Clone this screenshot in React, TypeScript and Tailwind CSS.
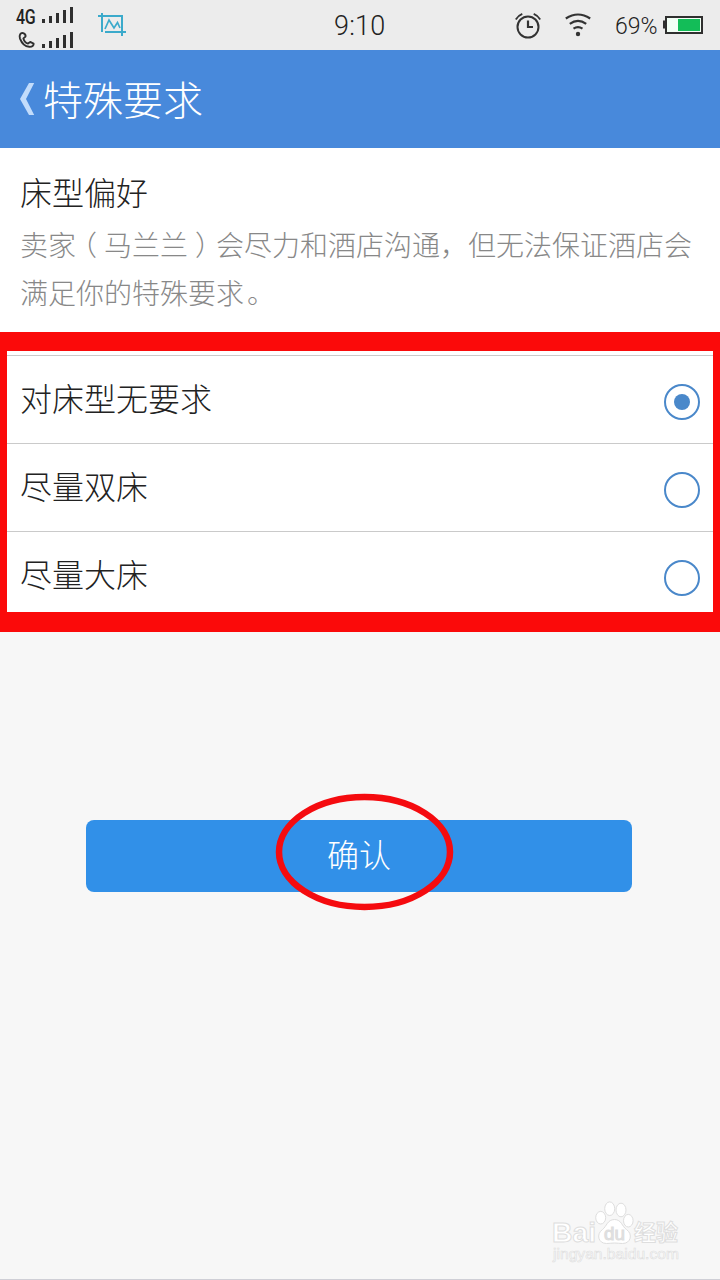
import { useState } from 'react';

const options = ['对床型无要求', '尽量双床', '尽量大床'];

function SignalBars() {
  return (
    <svg width="32" height="17" viewBox="0 0 32 17" fill="#2f2f2f">
      <rect x="0" y="13" width="3" height="4" />
      <rect x="7" y="10" width="3" height="7" />
      <rect x="14" y="7" width="3" height="10" />
      <rect x="21" y="4" width="3" height="13" />
      <rect x="28" y="1" width="3" height="16" />
    </svg>
  );
}

function StatusBar() {
  return (
    <div className="flex h-[50px] bg-[#ececec] text-[#222]">
      <div className="flex w-[98px] flex-col pl-4 pt-[6px]">
        <div className="flex h-[25px] items-start">
          <span className="mt-[2px] w-[26px] origin-left scale-x-[0.82] font-['Roboto','Liberation_Sans',sans-serif] text-[19.5px] font-medium leading-[20px] tracking-[-0.5px]">4G</span>
          <SignalBars />
        </div>
        <div className="flex items-start">
          <svg width="26" height="18" viewBox="0 0 26 18" fill="none" stroke="#2f2f2f" strokeWidth="1.9" strokeLinejoin="round">
            <path d="M7.200 2.200C4.600 1.400 2.800 4 4 7.600c1.600 4.200 5.200 7.800 9.200 8.200 3 .3 4.800-1.600 4.400-3.200l-3.400-1.700-2.200 1.700C10 12 8 9.600 7.400 7.400L9.500 5.600c.3-1.500-.8-2.900-2.300-3.400Z" />
          </svg>
          <SignalBars />
        </div>
      </div>
      <svg className="mt-3" width="29" height="25" viewBox="0 0 29 25" fill="none" stroke="#3baacb" strokeWidth="2">
        <path d="M0 4h24v20M4 1v19M7 20h21" />
        <path d="M7 17l4-9 5 8 3.500-5.500L22 16" strokeWidth="1.700" />
      </svg>
      <div className="ml-[207px] w-[181px] font-['Roboto','Liberation_Sans',sans-serif] text-[27px] font-light leading-[52px] tracking-[0.2px]">9:10</div>
      <svg className="mt-3" width="27" height="27" viewBox="0 0 27 27" fill="none" stroke="#333" strokeWidth="2">
        <circle cx="13" cy="15" r="10.500" />
        <path d="M13 8.500V15h5" strokeWidth="2.200" />
        <path d="M.8 7.500Q3 3.500 7.300 1.800M25.200 7.500Q23 3.500 18.700 1.800" strokeWidth="1.800" />
      </svg>
      <svg className="ml-[23px] mt-3" width="26" height="25" viewBox="0 0 26 25" fill="none" stroke="#333" strokeWidth="2.200">
        <path d="M.8 6.500Q13-1.500 25.200 6.500M4.800 11.800Q13 6 21.200 11.800M8.500 16.600Q13 13.800 17.500 16.600" />
        <circle cx="13" cy="22" r="2.200" fill="#333" stroke="none" />
      </svg>
      <div className="ml-6 w-12 font-['Roboto','Liberation_Sans',sans-serif] text-[23px] font-light leading-[53px]">69%</div>
      <svg className="mt-4" width="40" height="18" viewBox="0 0 40 18">
        <rect x="0" y="4.500" width="3" height="8" fill="#2f2f2f" />
        <rect x="3" y="1" width="36" height="16" fill="#f3fff6" stroke="#2f2f2f" strokeWidth="2" />
        <rect x="15" y="3" width="22" height="12" fill="#13bd58" />
      </svg>
    </div>
  );
}

function Radio({ checked }: { checked: boolean }) {
  return (
    <span className="mt-[5px] flex size-9 items-center justify-center rounded-full border-2 border-[#4a88ca]">
      {checked && <span className="size-4 rounded-full bg-[#4a88ca]" />}
    </span>
  );
}

function Watermark() {
  return (
    <svg className="absolute left-[550px] top-[1199px]" width="136" height="68" viewBox="0 0 136 68" fill="#fff" stroke="#dedede" strokeWidth="1">
      <text x="2" y="43" fontFamily="Liberation Sans, sans-serif" fontWeight="bold" fontSize="28" textLength="44" lengthAdjust="spacingAndGlyphs">Bai</text>
      <path d="M64.500 20.500c-7 0-8 7-12 10-6.500 4.500-4.500 14 4 14 3 0 5.300-.5 8-.5s5 .5 8 .5c8.500 0 10.500-9.500 4-14-4.500-3-5-10-12-10Z" />
      <ellipse cx="50.700" cy="18.700" rx="5" ry="6.300" />
      <ellipse cx="59.700" cy="9.700" rx="5" ry="6.800" />
      <ellipse cx="71" cy="11" rx="5" ry="6.800" />
      <ellipse cx="78.300" cy="21.700" rx="4.800" ry="6.300" />
      <text x="54" y="41" fontFamily="Liberation Sans, sans-serif" fontSize="18" fill="#e2e2e2" textLength="21" lengthAdjust="spacingAndGlyphs">du</text>
      <text x="84" y="41" fontFamily="Noto Sans CJK SC, sans-serif" fontWeight="bold" fontSize="22" textLength="44">经验</text>
      <text x="3" y="60" fontFamily="Liberation Sans, sans-serif" fontSize="14" strokeWidth=".6" textLength="126" lengthAdjust="spacingAndGlyphs">jingyan.baidu.com</text>
    </svg>
  );
}

export default function App() {
  const [selected, setSelected] = useState(0);

  return (
    <div className="relative flex h-[1280px] w-[720px] flex-col overflow-hidden border-b border-[#cfcfd6] bg-[#f7f7f7] font-['Noto_Sans_CJK_SC',sans-serif] font-light">
      <StatusBar />
      <header className="flex h-[98px] items-center bg-[#4889db] pl-5 text-white">
        <svg width="15" height="34" viewBox="0 0 15 34" fill="#c2dcfb">
          <path d="M9 1H14.200L6 17 14.200 33H9L0 17Z" />
        </svg>
        <h1 className="mb-[3px] ml-2 text-[40px] font-light leading-[60px]">特殊要求</h1>
      </header>

      <section className="h-[184px] bg-white pl-5 pt-[18px]">
        <h2 className="text-[32px] font-light leading-[50px] text-[#222]">床型偏好</h2>
        <p className="mt-1 w-[680px] text-[28px] leading-[48px] text-[#888]">
          <span className="block">
            卖家<span className="ml-[7px] mr-[7px] [font-feature-settings:'halt']">（</span>马兰兰<span className="ml-[7px] mr-[7px] [font-feature-settings:'halt']">）</span>会尽力和酒店沟通，但无法保证酒店会
          </span>
          <span className="block">
            满足你的特殊要求<span className="ml-[3px] [font-feature-settings:'halt']">。</span>
          </span>
        </p>
      </section>

      <section className="h-[300px] overflow-hidden border-x-[7px] border-b-[20px] border-t-[19px] border-[#fb0a0a] bg-white pt-1">
        {options.map((label, i) => (
          <button
            key={label}
            onClick={() => setSelected(i)}
            className="flex h-[88px] w-full items-center justify-between border-t border-[#cacaca] pl-[13px] pr-[13px] text-[#222]"
          >
            <span className="mb-[5px] text-[32px] leading-[48px]">{label}</span>
            <Radio checked={selected === i} />
          </button>
        ))}
      </section>

      <button className="ml-[86px] mt-[188px] h-[72px] w-[546px] rounded-lg bg-[#3190e8] pb-[7px] text-[32px] font-light leading-[64px] text-white">
        确认
      </button>

      {/* hand-drawn marker round the confirm label */}
      <svg className="pointer-events-none absolute left-[275px] top-[793px]" width="180" height="118" viewBox="0 0 180 118" fill="none">
        <ellipse cx="89.500" cy="59" rx="85.500" ry="55" stroke="#f50b0f" strokeWidth="6.500" />
      </svg>

      <Watermark />
    </div>
  );
}
